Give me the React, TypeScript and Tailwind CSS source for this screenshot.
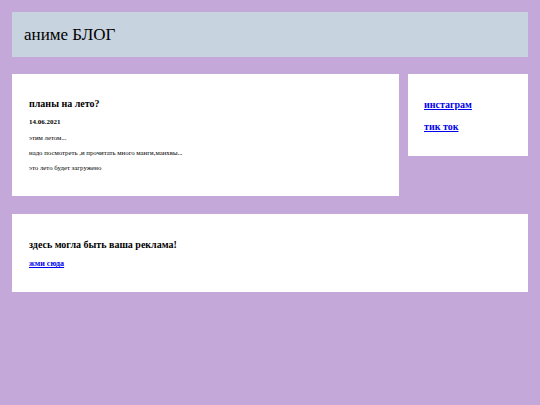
import React from 'react';

const App: React.FC = () => {
  return (
    <div className="min-h-[405px] w-full bg-[#c4a8da] p-3 font-['Liberation_Serif',serif] text-black">
      {/* header */}
      <header className="flex h-[45px] items-center bg-[#c7d3df] px-3">
        <h1 className="text-[17px] leading-none">аниме БЛОГ</h1>
      </header>

      <div className="mt-[17px] flex items-start gap-[9px]">
        {/* post */}
        <article className="flex h-[122px] flex-1 flex-col bg-white px-[17px] pt-[25px]">
          <h2 className="text-[10px] font-bold leading-none">планы на лето?</h2>
          <p className="mt-[10px] text-[7px] font-bold leading-none">14.06.2021</p>
          <p className="mt-[9px] text-[6.8px] leading-none">этим летом...</p>
          <p className="mt-[8px] text-[6.8px] leading-none">надо посмотреть ,и прочитать много манги,манхвы...</p>
          <p className="mt-[8px] text-[6.8px] leading-none">это лето будет загружено</p>
        </article>

        {/* links */}
        <aside className="flex h-[82px] w-[120px] flex-col gap-[12px] bg-white px-[16px] pt-[26px]">
          <a href="#" className="w-fit text-[10px] font-bold leading-none text-[#0000ee] underline">инстаграм</a>
          <a href="#" className="w-fit text-[10px] font-bold leading-none text-[#0000ee] underline">тик ток</a>
        </aside>
      </div>

      {/* ad */}
      <section className="mt-[18px] flex h-[78px] flex-col bg-white px-[17px] pt-[26px]">
        <h2 className="text-[10px] font-bold leading-none">здесь могла быть ваша реклама!</h2>
        <a href="#" className="mt-[10px] w-fit text-[8px] font-bold leading-none text-[#0000ee] underline">жми сюда</a>
      </section>
    </div>
  );
};

export default App;
